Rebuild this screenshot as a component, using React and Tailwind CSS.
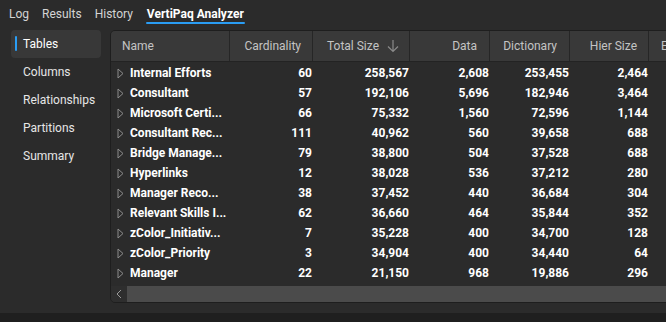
import React from "react";

const rows = [
  ["Internal Efforts", "60", "258,567", "2,608", "253,455", "2,464"],
  ["Consultant", "57", "192,106", "5,696", "182,946", "3,464"],
  ["Microsoft Certi...", "66", "75,332", "1,560", "72,596", "1,144"],
  ["Consultant Rec...", "111", "40,962", "560", "39,658", "688"],
  ["Bridge Manage...", "79", "38,800", "504", "37,528", "688"],
  ["Hyperlinks", "12", "38,028", "536", "37,212", "280"],
  ["Manager Reco...", "38", "37,452", "440", "36,684", "304"],
  ["Relevant Skills I...", "62", "36,660", "464", "35,844", "352"],
  ["zColor_Initiativ...", "7", "35,228", "400", "34,700", "128"],
  ["zColor_Priority", "3", "34,904", "400", "34,440", "64"],
  ["Manager", "22", "21,150", "968", "19,886", "296"],
];

const widths = ["w-[83px]", "w-[97px]", "w-[80px]", "w-[80px]", "w-[79px]"];

function Tri() {
  return (
    <svg width="7" height="11" viewBox="0 0 7 11" className="shrink-0">
      <polygon points="1,1 6,5.5 1,10" fill="none" stroke="#8c8c8c" strokeWidth="1" strokeLinejoin="round" />
    </svg>
  );
}

export default function App() {
  const font = { fontFamily: 'Roboto, "Noto Sans", sans-serif' };
  return (
    <div className="w-[666px] h-[322px] bg-[#2b2b2b] overflow-hidden flex flex-col text-[12px]" style={font}>
      {/* Tabs */}
      <div className="h-[30px] flex items-start pl-[9px] gap-[13px] text-[12px] shrink-0">
        <div className="pt-[6px] text-[#d4d4d4] leading-[16px]">Log</div>
        <div className="pt-[6px] text-[#d4d4d4] leading-[16px]">Results</div>
        <div className="pt-[6px] text-[#d4d4d4] leading-[16px]">History</div>
        <div className="flex flex-col items-stretch">
          <div className="pt-[6px] font-bold text-white px-[1px] leading-[16px]">VertiPaq Analyzer</div>
          <div className="h-[2px] bg-[#2a9df4] rounded-full mt-[0px]"></div>
        </div>
      </div>
      {/* Body */}
      <div className="flex h-[273px] shrink-0">
        <div className="w-[110px] shrink-0 pl-[11px] pr-[9px] flex flex-col">
          <div className="h-[28px] rounded-[4px] bg-[#383838] flex items-center relative">
            <div className="absolute left-[4px] top-[6px] w-[2px] h-[15px] bg-[#2a9df4] rounded-full"></div>
            <span className="pl-[12px] text-white">Tables</span>
          </div>
          {["Columns", "Relationships", "Partitions", "Summary"].map((t) => (
            <div key={t} className="h-[28px] flex items-center pl-[12px] text-[#e6e6e6]">{t}</div>
          ))}
        </div>
        <div className="flex-1 min-w-0 relative">
          <div className="w-[600px] h-full border border-[#1e1e1e] rounded-l-[5px] overflow-hidden flex flex-col bg-[#2b2b2b]">
            {/* Header */}
            <div className="h-[31px] bg-[#393939] flex border-b border-[#232323] shrink-0 text-[#c4c4c4]">
              <div className="w-[119px] border-r border-[#262626] flex items-center pl-[11px]">Name</div>
              <div className="w-[83px] border-r border-[#262626] flex items-center justify-end pr-[11px]">Cardinality</div>
              <div className="w-[97px] border-r border-[#262626] flex items-center justify-end pr-[10px]">
                Total Size
                <svg width="12" height="14" viewBox="0 0 12 14" className="ml-[8px]">
                  <path d="M6 1 V12.5 M1 7.5 L6 12.5 L11 7.5" fill="none" stroke="#8a8a8a" strokeWidth="1.2" />
                </svg>
              </div>
              <div className="w-[80px] border-r border-[#262626] flex items-center justify-end pr-[12px]">Data</div>
              <div className="w-[80px] border-r border-[#262626] flex items-center justify-end pr-[12px]">Dictionary</div>
              <div className="w-[79px] border-r border-[#262626] flex items-center justify-end pr-[11px]">Hier Size</div>
              <div className="w-[60px] flex items-center pl-[12px]">Encoding</div>
            </div>
            {/* Rows */}
            <div className="flex flex-col pt-[1px] font-bold text-white">
              {rows.map((r) => (
                <div key={r[0]} className="h-[20px] flex items-center">
                  <div className="w-[119px] flex items-center pl-[6px] gap-[6px] whitespace-nowrap overflow-hidden">
                    <Tri />
                    <span>{r[0]}</span>
                  </div>
                  {r.slice(1).map((v, i) => (
                    <div key={i} className={`${widths[i]} text-right pr-[1px]`}>{v}</div>
                  ))}
                </div>
              ))}
            </div>
            <div className="flex-1"></div>
            {/* Scrollbar */}
            <div className="h-[16px] flex shrink-0">
              <div className="w-[16px] bg-[#2e2e2e] flex items-center justify-center">
                <svg width="6" height="10" viewBox="0 0 6 10">
                  <path d="M5 1 L1 5 L5 9" fill="none" stroke="#9a9a9a" strokeWidth="1" />
                </svg>
              </div>
              <div className="flex-1 bg-[#4b4b4b]"></div>
            </div>
          </div>
        </div>
      </div>
      <div className="h-[10px] shrink-0"></div>
      <div className="flex-1 bg-[#1f1f1f]"></div>
    </div>
  );
}
